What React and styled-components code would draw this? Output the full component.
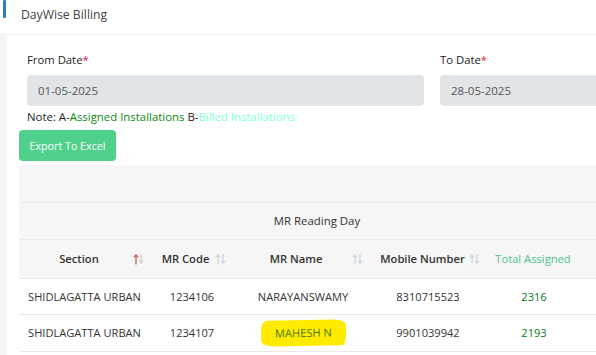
import React from "react";
import styled, { createGlobalStyle } from "styled-components";

const Global = createGlobalStyle`
  html, body { margin: 0; padding: 0; background: #ffffff; }
  body { font-family: "Open Sans", "Noto Sans", sans-serif; color: #333; overflow: hidden; }
  * { box-sizing: border-box; }
`;

const Page = styled.div`
  width: 596px;
  height: 355px;
  overflow: hidden;
  background: #fff;
`;

const Header = styled.div`
  height: 35px;
  display: flex;
  align-items: flex-start;
  gap: 15px;
  padding-left: 3px;
  border-bottom: 1px solid #ebedef;
`;

const Accent = styled.div`
  width: 3px;
  height: 18px;
  background: #2b7fc4;
  border-radius: 1px;
`;

const Title = styled.div`
  font-size: 12.2px;
  color: #444;
  line-height: 29px;
`;

const Body = styled.div`
  display: flex;
  height: 320px;
`;

const Gutter = styled.div`
  width: 7px;
  flex: none;
  background: #f5f6f8;
`;

const Content = styled.div`
  flex: 1;
  min-width: 0;
  padding: 0 0 0 12px;
  overflow: hidden;
`;

const FormRow = styled.div`
  display: grid;
  grid-template-columns: 397px 397px;
  column-gap: 16px;
  padding: 16px 0 0 8px;
`;

const Field = styled.div`
  display: flex;
  flex-direction: column;
`;

const Label = styled.label`
  font-size: 11.3px;
  color: #222;
  line-height: 18px;
  height: 24px;
`;

const Req = styled.span`
  color: #e8213d;
`;

const DateInput = styled.div`
  height: 31px;
  background: #e2e5e8;
  border-radius: 4px;
  padding: 0 11px;
  display: flex;
  align-items: center;
  font-size: 11.5px;
  color: #555;
`;

const Note = styled.div`
  padding-left: 8px;
  margin-top: 2px;
  font-size: 11.4px;
  line-height: 17px;
  color: #222;
`;

const Tone = styled.span`
  color: ${(p) => p.$c};
`;

const ExportButton = styled.button`
  margin-top: 5px;
  height: 31px;
  width: 97px;
  padding: 0;
  border: none;
  border-radius: 4px;
  background: #4fd18b;
  color: #fff;
  font-family: inherit;
  font-size: 10.7px;
  display: block;
`;

const TableWrap = styled.div`
  margin-top: 4px;
  width: 800px;
`;

const Table = styled.table`
  border-collapse: collapse;
  table-layout: fixed;
  width: 800px;
`;

const GroupCell = styled.th`
  background: #f6f6f6;
  height: ${(p) => p.$h}px;
  padding: 0;
  font-weight: 400;
  font-size: 11.4px;
  color: #333;
  border-bottom: 1px solid #eaeaea;
  text-align: left;
`;

const GroupLabel = styled.div`
  width: 596px;
  text-align: center;
`;

const HeadCell = styled.th`
  background: #f6f6f6;
  height: 39px;
  padding: 0 ${(p) => p.$pr ?? 6}px 0 ${(p) => p.$pl ?? 4}px;
  font-size: 11.2px;
  color: ${(p) => p.$c || "#333"};
  border-bottom: 1px solid #eaeaea;
  white-space: nowrap;
`;

const HeadInner = styled.div`
  display: grid;
  grid-template-columns: 1fr auto;
  align-items: center;
`;

const HeadText = styled.span`
  text-align: center;
  font-weight: ${(p) => (p.$light ? 400 : 600)};
`;

const Cell = styled.td`
  height: ${(p) => p.$h}px;
  text-align: center;
  font-size: 11.1px;
  color: ${(p) => p.$c || "#333"};
  border-bottom: 1px solid #e9e9e9;
  padding: 0 2px;
  white-space: nowrap;
`;

const Highlight = styled.span`
  display: inline-block;
  background: #ffeb00;
  color: #4a7a00;
  padding: 5px 14px 6px 14px;
  border-radius: 6px 12px 4px 14px / 10px 6px 12px 6px;
  transform: rotate(-1deg);
`;

function SortIcon({ active }) {
  return (
    <svg width="11" height="12" viewBox="0 0 11 12" style={{ display: "block" }}>
      <g fill="none" strokeWidth="1.2" strokeLinecap="round">
        <g stroke={active ? "#c8553d" : "#c9d3dc"}>
          <path d="M3 11V2" />
          <path d="M1.2 3.8L3 2l1.8 1.8" />
        </g>
        <g stroke="#c9d3dc">
          <path d="M8 1v9" />
          <path d="M6.2 8.2L8 10l1.8-1.8" />
        </g>
      </g>
    </svg>
  );
}

const columns = [
  { key: "section", title: "Section", width: 131, sort: true, active: true, pr: 6, pl: 6 },
  { key: "code", title: "MR Code", width: 84, sort: true, pr: 8, pl: 6 },
  { key: "name", title: "MR Name", width: 138, sort: true, pr: 9, pl: 6 },
  { key: "mobile", title: "Mobile Number", width: 112, sort: true, pr: 4, pl: 4 },
  { key: "assigned", title: "Total Assigned", width: 100, color: "#4cc38a" },
  { key: "billed", title: "Total Billed", width: 88, color: "#7fffd4" },
  { key: "rest", title: "", width: 147 },
];

const rows = [
  { section: "SHIDLAGATTA URBAN", code: "1234106", name: "NARAYANSWAMY", mobile: "8310715523", assigned: "2316", billed: "", h: 36 },
  { section: "SHIDLAGATTA URBAN", code: "1234107", name: "MAHESH N", mobile: "9901039942", assigned: "2193", billed: "", h: 37, mark: true },
];

export default function App() {
  return (
    <Page>
      <Global />
      <Header>
        <Accent />
        <Title>DayWise Billing</Title>
      </Header>
      <Body>
        <Gutter />
        <Content>
          <FormRow>
            <Field>
              <Label>From Date<Req>*</Req></Label>
              <DateInput>01-05-2025</DateInput>
            </Field>
            <Field>
              <Label>To Date<Req>*</Req></Label>
              <DateInput>28-05-2025</DateInput>
            </Field>
          </FormRow>
          <Note>
            Note: A-<Tone $c="#0a8a12">Assigned Installations</Tone> B-
            <Tone $c="#7fffd4">Billed Installations</Tone>
          </Note>
          <ExportButton>Export To Excel</ExportButton>
          <TableWrap>
            <Table>
              <colgroup>
                {columns.map((c) => (
                  <col key={c.key} style={{ width: c.width }} />
                ))}
              </colgroup>
              <thead>
                <tr>
                  <GroupCell colSpan={7} $h={37} />
                </tr>
                <tr>
                  <GroupCell colSpan={7} $h={37}>
                    <GroupLabel>MR Reading Day</GroupLabel>
                  </GroupCell>
                </tr>
                <tr>
                  {columns.map((c) => (
                    <HeadCell key={c.key} $c={c.color} $pr={c.pr} $pl={c.pl}>
                      <HeadInner>
                        <HeadText $light={!!c.color}>{c.title}</HeadText>
                        {c.sort ? <SortIcon active={c.active} /> : <span />}
                      </HeadInner>
                    </HeadCell>
                  ))}
                </tr>
              </thead>
              <tbody>
                {rows.map((r, i) => (
                  <tr key={i}>
                    <Cell $h={r.h}>{r.section}</Cell>
                    <Cell $h={r.h}>{r.code}</Cell>
                    <Cell $h={r.h}>
                      {r.mark ? <Highlight>{r.name}</Highlight> : r.name}
                    </Cell>
                    <Cell $h={r.h}>{r.mobile}</Cell>
                    <Cell $h={r.h} $c="#0a7d14">{r.assigned}</Cell>
                    <Cell $h={r.h}>{r.billed}</Cell>
                    <Cell $h={r.h} />
                  </tr>
                ))}
              </tbody>
            </Table>
          </TableWrap>
        </Content>
      </Body>
    </Page>
  );
}
